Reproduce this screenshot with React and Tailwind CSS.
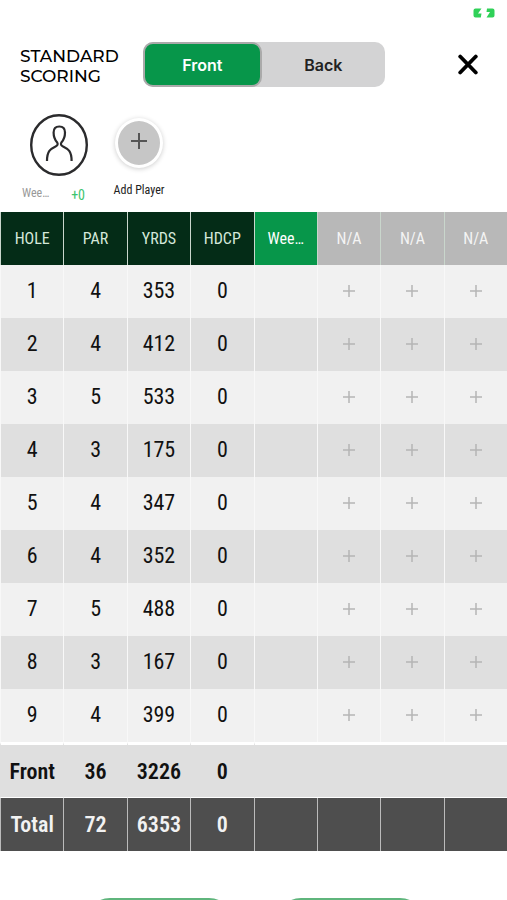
import React, { useState } from "react";

const holes = [
    { hole: 1, par: 4, yards: 353, hdcp: 0 },
    { hole: 2, par: 4, yards: 412, hdcp: 0 },
    { hole: 3, par: 5, yards: 533, hdcp: 0 },
    { hole: 4, par: 3, yards: 175, hdcp: 0 },
    { hole: 5, par: 4, yards: 347, hdcp: 0 },
    { hole: 6, par: 4, yards: 352, hdcp: 0 },
    { hole: 7, par: 5, yards: 488, hdcp: 0 },
    { hole: 8, par: 3, yards: 167, hdcp: 0 },
    { hole: 9, par: 4, yards: 399, hdcp: 0 },
];

const emptySlots = [2, 3, 4];

function BatteryIcon() {
    return (
        <svg className="w-[22px] h-[10px]" viewBox="0 0 22 10" fill="#30d158" aria-hidden="true">
            <path d="M2.5 0.5H8.5L5 5.5H8.5L7.8 9.5H2.5Q0.5 9.5 0.5 7.5V2.5Q0.5 0.5 2.5 0.5Z" />
            <path d="M14 0.5H19.5Q21.5 0.5 21.5 2.5V7.5Q21.5 9.5 19.5 9.5H13.5L17 4H13.5Z" />
        </svg>
    );
}

function PlusIcon({ className }) {
    return (
        <svg className={className} viewBox="0 0 16 16" stroke="currentColor" strokeWidth="2" fill="none" aria-hidden="true">
            <path d="M8 0V16M0 8H16" />
        </svg>
    );
}

function PlayerAvatar() {
    return (
        <svg className="w-[58px] h-[62px]" viewBox="0 0 58 62" fill="none" stroke="#2b2b2d" aria-hidden="true">
            <ellipse cx="29" cy="31" rx="27.8" ry="29.8" strokeWidth="2.4" />
            <path
                d="M17 47C17 37 20.5 35 25.5 32.5C27.8 31.2 28.2 30 27 28.2C24.6 25.5 23.6 22.5 23.6 18.5C23.6 14.5 25.8 12.5 29.3 12.5C32.8 12.5 35 14.5 35 18.5C35 22.5 34 25.5 31.6 28.2C30.4 30 30.8 31.2 33.1 32.5C38.1 35 41.6 37 41.6 47"
                strokeWidth="2.2"
            />
        </svg>
    );
}

function Header({ side, setSide }) {
    const active = "bg-[#07964a] text-white border-[#aaa]";
    const inactive = "text-[#222] border-transparent";

    return (
        <header className="flex items-center pl-5 pr-7 mt-6">
            <h1 className="w-[123px] shrink-0 pt-[2px] font-['Montserrat','Inter',sans-serif] font-medium text-[17px] leading-5 text-black">
                STANDARD SCORING
            </h1>
            <div className="flex flex-1 h-[45px] rounded-[10px] bg-[#d3d3d4] font-['Inter',sans-serif] text-base font-semibold">
                <button
                    onClick={() => setSide("front")}
                    className={`flex-[49] rounded-[10px] border-2 ${side === "front" ? active : inactive}`}
                >
                    Front
                </button>
                <button
                    onClick={() => setSide("back")}
                    className={`flex-[51] rounded-[10px] border-2 ${side === "back" ? active : inactive}`}
                >
                    Back
                </button>
            </div>
            <button aria-label="Close" className="ml-[72px]">
                <svg className="w-[22px] h-[22px]" viewBox="0 0 22 22" stroke="#000" strokeWidth="3.8" strokeLinecap="round" aria-hidden="true">
                    <path d="M3.2 2.5L18.8 18.5M18.8 2.5L3.2 18.5" />
                </svg>
            </button>
        </header>
    );
}

function Players() {
    return (
        <section className="flex items-start pl-5 pt-[27px] h-[125px]">
            <div className="w-[77px] flex flex-col items-center">
                <PlayerAvatar />
                <div className="w-full flex justify-between pl-[2px] pr-3 pt-[9px] leading-4">
                    <span className="text-xs text-[#999]">Wee…</span>
                    <span className="text-sm text-[#3cc46e]">+0</span>
                </div>
            </div>
            <button className="w-[84px] pt-1 flex flex-col items-center">
                <span className="w-12 h-[50px] rounded-[50%] border-3 border-white bg-[#c6c6c6] shadow-[0_1px_5px_rgba(0,0,0,0.2)] flex items-center justify-center pb-1 text-[#555]">
                    <PlusIcon className="w-4 h-4" />
                </span>
                <span className="pt-[14px] text-xs leading-4 text-[#222]">Add Player</span>
            </button>
        </section>
    );
}

function ScoreTable() {
    const head = "h-[53px] p-0 font-normal border-l border-[#c9d6cc]";
    const cell = "h-[53px] p-0 pb-[2px] border-l border-[#f8f8f8]";
    const front = "h-14 p-0 border-t-3 border-b border-l border-t-white border-b-white border-l-transparent";
    const total = "h-[53px] p-0 border-l border-[#bbb]";

    return (
        <table className="w-full table-fixed border-separate border-spacing-0 text-center">
            <thead>
                <tr className="text-base text-[#d5e8da]">
                    <th className={`${head} bg-[#042c17]`}>HOLE</th>
                    <th className={`${head} bg-[#042c17]`}>PAR</th>
                    <th className={`${head} bg-[#042c17]`}>YRDS</th>
                    <th className={`${head} bg-[#042c17]`}>HDCP</th>
                    <th className={`${head} bg-[#07964a] text-white`}>Wee…</th>
                    {emptySlots.map((slot) => (
                        <th key={slot} className={`${head} bg-[#b8b8b8] text-[#f4f4f4]`}>N/A</th>
                    ))}
                </tr>
            </thead>

            {/* Holes */}
            <tbody className="text-[22px] text-[#111]">
                {holes.map((h) => (
                    <tr key={h.hole} className="odd:bg-[#f1f1f1] even:bg-[#dfdfdf]">
                        <td className={cell}>{h.hole}</td>
                        <td className={cell}>{h.par}</td>
                        <td className={cell}>{h.yards}</td>
                        <td className={cell}>{h.hdcp}</td>
                        <td className={cell}></td>
                        {emptySlots.map((slot) => (
                            <td key={slot} className={cell}>
                                <button
                                    aria-label={`Add player ${slot}`}
                                    className="w-full h-full flex items-center justify-center text-[#b5b5b5]"
                                >
                                    <PlusIcon className="w-3 h-3" />
                                </button>
                            </td>
                        ))}
                    </tr>
                ))}
            </tbody>

            {/* Totals */}
            <tfoot className="text-[22px] font-semibold">
                <tr className="bg-[#dfdfdf] text-[#111]">
                    <td className={front}>Front</td>
                    <td className={front}>36</td>
                    <td className={front}>3226</td>
                    <td className={front}>0</td>
                    <td colSpan={4} className={front}></td>
                </tr>
                <tr className="bg-[#4e4e4e] text-[#f2f2f2]">
                    <td className={total}>Total</td>
                    <td className={total}>72</td>
                    <td className={total}>6353</td>
                    <td className={total}>0</td>
                    <td className={total}></td>
                    <td className={total}></td>
                    <td className={total}></td>
                    <td className={total}></td>
                </tr>
            </tfoot>
        </table>
    );
}

export default function App() {
    const [side, setSide] = useState("front");

    return (
        <main className="h-screen overflow-hidden bg-white font-['Roboto_Condensed','Roboto',sans-serif]">
            <div className="flex justify-end pr-3 pt-2">
                <BatteryIcon />
            </div>
            <Header side={side} setSide={setSide} />
            <Players />
            <ScoreTable />

            {/* Bottom actions */}
            <div className="flex justify-center gap-11 pt-[47px] pl-[3px]">
                <button aria-label="Save" className="w-[147px] h-12 rounded-full border-2 border-[#5fb57c]"></button>
                <button aria-label="Finish" className="w-[147px] h-12 rounded-full border-2 border-[#5fb57c]"></button>
            </div>
        </main>
    );
}
